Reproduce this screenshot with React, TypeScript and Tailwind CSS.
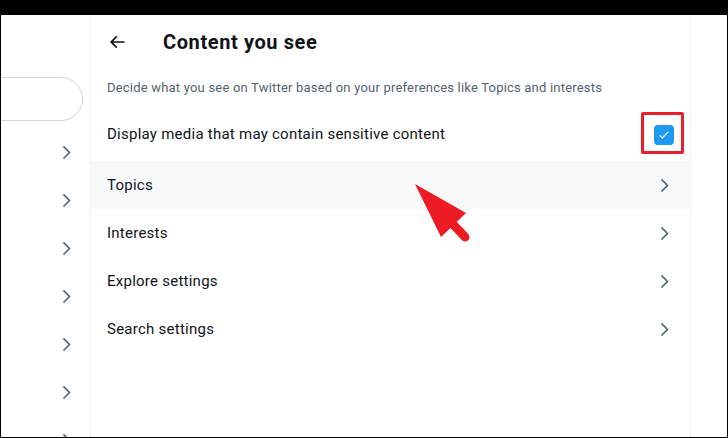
import React from 'react';

function Chevron({ className }: { className?: string }) {
  return (
    <svg viewBox="0 0 24 24" className={className} fill="currentColor">
      <path d="M14.586 12L7.543 4.96l1.414-1.42L17.414 12l-8.457 8.46-1.414-1.42L14.586 12z" />
    </svg>
  );
}

function BackArrow({ className }: { className?: string }) {
  return (
    <svg viewBox="0 0 24 24" className={className} fill="currentColor">
      <path d="M7.414 13l5.043 5.04-1.414 1.42L3.586 12l7.457-7.46 1.414 1.42L7.414 11H21v2H7.414z" />
    </svg>
  );
}

const rows = ['Topics', 'Interests', 'Explore settings', 'Search settings'];

export default function App() {
  return (
    <div className="w-[728px] h-[438px] bg-black flex flex-col font-['Segoe_UI',Roboto,'Liberation_Sans',sans-serif] overflow-hidden">
      <div className="h-[15px] shrink-0" />
      <div className="flex-1 ml-[1px] mr-[1px] mb-[1px] bg-white flex relative overflow-hidden">
        {/* left settings column, mostly cut off */}
        <div className="w-[90px] shrink-0 border-r border-[#eff3f4] overflow-hidden">
          <div className="mt-[62px] h-[44px] w-[200px] -ml-[118px] rounded-full border border-[#cfd9de]" />
          <div className="mt-[7px] flex flex-col">
            {[0, 1, 2, 3, 4, 5, 6].map((i) => (
              <div key={i} className="h-[48px] flex items-center justify-end pr-[14px] text-[#536471]">
                <Chevron className="w-[18.75px] h-[18.75px]" />
              </div>
            ))}
          </div>
        </div>

        {/* main column */}
        <div className="w-[600px] shrink-0 border-r border-[#eff3f4] flex flex-col">
          <div className="h-[53px] flex items-center px-4">
            <BackArrow className="w-5 h-5 text-[#0f1419]" />
            <h2 className="ml-[36px] text-[20px] font-bold tracking-[0.6px] text-[#0f1419] leading-6">Content you see</h2>
          </div>
          <div className="h-[40px] flex items-center px-4">
            <p className="text-[13px] tracking-[0.2px] text-[#536471]">
              Decide what you see on Twitter based on your preferences like Topics and interests
            </p>
          </div>
          <div className="h-[53px] flex items-center justify-between px-4">
            <span className="text-[15px] tracking-[0.25px] text-[#0f1419]">Display media that may contain sensitive content</span>
            <div className="relative">
              <div className="w-5 h-5 rounded-[4px] bg-[#1d9bf0] flex items-center justify-center">
                <svg viewBox="0 0 24 24" className="w-[16px] h-[16px]" fill="none" stroke="white" strokeWidth="1.8">
                  <path d="M5.5 12.5l4 4L18.5 7" />
                </svg>
              </div>
              <div className="absolute -left-[13px] -top-[13px] w-[43px] h-[42px] border-[3px] border-[#e8202a] rounded-[2px]" />
            </div>
          </div>
          {rows.map((r, i) => (
            <div
              key={r}
              className={`h-[48px] flex items-center justify-between pl-4 pr-4 ${i === 0 ? 'bg-[#f7f9f9]' : ''}`}
            >
              <span className="text-[15px] tracking-[0.25px] text-[#0f1419]">{r}</span>
              <Chevron className="w-[18.75px] h-[18.75px] text-[#536471]" />
            </div>
          ))}
        </div>

        <div className="flex-1" />

        {/* red annotation arrow */}
        <svg className="absolute left-[400px] top-[155px] w-[80px] h-[80px]" viewBox="0 0 80 80">
          <polygon points="14,14 65,43 40,67" fill="#ed1c24" />
          <line x1="48" y1="50" x2="64" y2="67" stroke="#ed1c24" strokeWidth="9" strokeLinecap="round" />
        </svg>
      </div>
    </div>
  );
}
